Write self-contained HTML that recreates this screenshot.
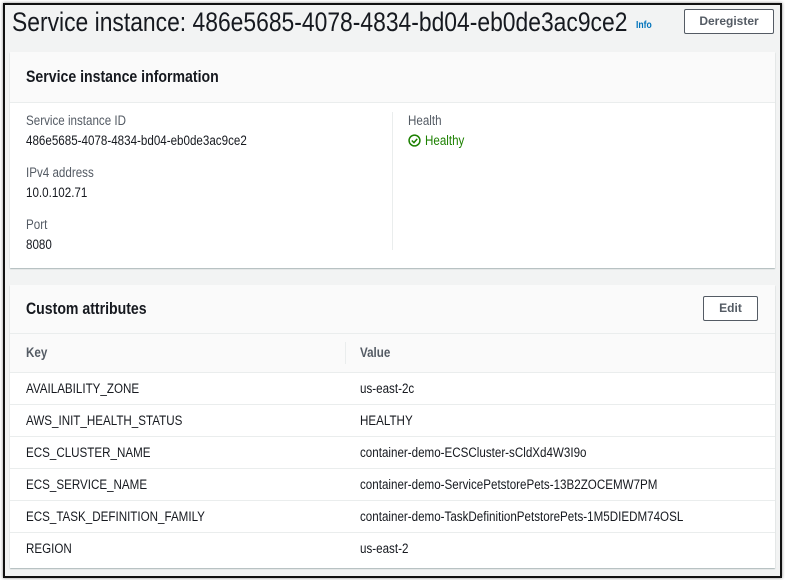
<html><head><style>
body{margin:0;width:785px;height:580px;background:#fff;font-family:"Liberation Sans",sans-serif;color:#16191f;position:relative;overflow:hidden}
.frame{position:absolute;left:3px;top:3px;width:775px;height:571px;border:2px solid #111;background:#f2f3f3;box-shadow:0 0 3px #888}
.a{position:absolute;white-space:nowrap}
.sq{display:inline-block;transform:scaleX(.86);transform-origin:0 0;white-space:nowrap}
.card{position:absolute;left:5px;width:765px;background:#fff;box-shadow:0 1px 1px #aab7b8}
.hd{background:#fafafa;border-bottom:1px solid #eaeded}
.btn{position:absolute;border:1px solid #545b64;background:#fff;font-weight:bold;font-size:12px;color:#545b64;text-align:center;border-radius:2px}
.lbl{font-size:13.5px;color:#545b64}
.v{font-size:13.5px}
.row{position:absolute;left:0;width:765px;height:32px;border-top:1px solid #eaeded;font-size:13.5px}
.c{position:absolute;top:8px;white-space:nowrap}
</style></head><body>
<div class="frame">
<div class="a" style="left:7px;top:2px;font-size:26.6px"><span class="sq">Service instance: 486e5685-4078-4834-bd04-eb0de3ac9ce2</span></div>
<div class="a" style="left:631px;top:15px;font-size:10px;font-weight:bold;color:#0073bb"><span class="sq">Info</span></div>
<div class="btn" style="left:679px;top:4px;width:88px;height:23px;line-height:23px">Deregister</div>

<div class="card" style="top:47px;height:216px">
<div class="hd" style="height:50px"><div class="a" style="left:16px;top:16px;font-size:16.4px;font-weight:bold"><span class="sq">Service instance information</span></div></div>
<div class="a lbl" style="left:16px;top:61px"><span class="sq">Service instance ID</span></div>
<div class="a v" style="left:16px;top:81px"><span class="sq">486e5685-4078-4834-bd04-eb0de3ac9ce2</span></div>
<div class="a lbl" style="left:16px;top:113px"><span class="sq">IPv4 address</span></div>
<div class="a v" style="left:16px;top:133px"><span class="sq">10.0.102.71</span></div>
<div class="a lbl" style="left:16px;top:165px"><span class="sq">Port</span></div>
<div class="a v" style="left:16px;top:185px"><span class="sq">8080</span></div>
<div class="a" style="left:382px;top:60px;width:1px;height:138px;background:#eaeded"></div>
<div class="a lbl" style="left:398px;top:61px"><span class="sq">Health</span></div>
<div class="a v" style="left:398px;top:81px;color:#1d8102"><svg width="13" height="13" viewBox="0 0 12 12" style="vertical-align:-2px"><circle cx="6" cy="6" r="5" fill="none" stroke="#1d8102" stroke-width="1.4"/><path d="M3.5 6l2 2 3-3.5" fill="none" stroke="#1d8102" stroke-width="1.4"/></svg> <span class="sq">Healthy</span></div>
</div>

<div class="card" style="top:280px;height:283px">
<div class="hd" style="height:48px"><div class="a" style="left:16px;top:15px;font-size:16.4px;font-weight:bold"><span class="sq">Custom attributes</span></div></div>
<div class="btn" style="left:693px;top:11px;width:53px;height:23px;line-height:23px">Edit</div>
<div style="position:absolute;top:49px;left:0;width:765px;height:38px;background:#fafafa"></div>
<div class="a" style="left:16px;top:60px;font-size:13.5px;font-weight:bold;color:#545b64"><span class="sq">Key</span></div>
<div class="a" style="left:335px;top:57px;width:1px;height:22px;background:#eaeded"></div>
<div class="a" style="left:350px;top:60px;font-size:13.5px;font-weight:bold;color:#545b64"><span class="sq">Value</span></div>
<div class="row" style="top:87px"><span class="c" style="left:16px"><span class="sq">AVAILABILITY_ZONE</span></span><span class="c" style="left:350px"><span class="sq">us-east-2c</span></span></div>
<div class="row" style="top:119px"><span class="c" style="left:16px"><span class="sq">AWS_INIT_HEALTH_STATUS</span></span><span class="c" style="left:350px"><span class="sq">HEALTHY</span></span></div>
<div class="row" style="top:151px"><span class="c" style="left:16px"><span class="sq">ECS_CLUSTER_NAME</span></span><span class="c" style="left:350px"><span class="sq">container-demo-ECSCluster-sCldXd4W3I9o</span></span></div>
<div class="row" style="top:183px"><span class="c" style="left:16px"><span class="sq">ECS_SERVICE_NAME</span></span><span class="c" style="left:350px"><span class="sq">container-demo-ServicePetstorePets-13B2ZOCEMW7PM</span></span></div>
<div class="row" style="top:215px"><span class="c" style="left:16px"><span class="sq">ECS_TASK_DEFINITION_FAMILY</span></span><span class="c" style="left:350px"><span class="sq">container-demo-TaskDefinitionPetstorePets-1M5DIEDM74OSL</span></span></div>
<div class="row" style="top:247px"><span class="c" style="left:16px"><span class="sq">REGION</span></span><span class="c" style="left:350px"><span class="sq">us-east-2</span></span></div>
</div>
</div>
</body></html>
